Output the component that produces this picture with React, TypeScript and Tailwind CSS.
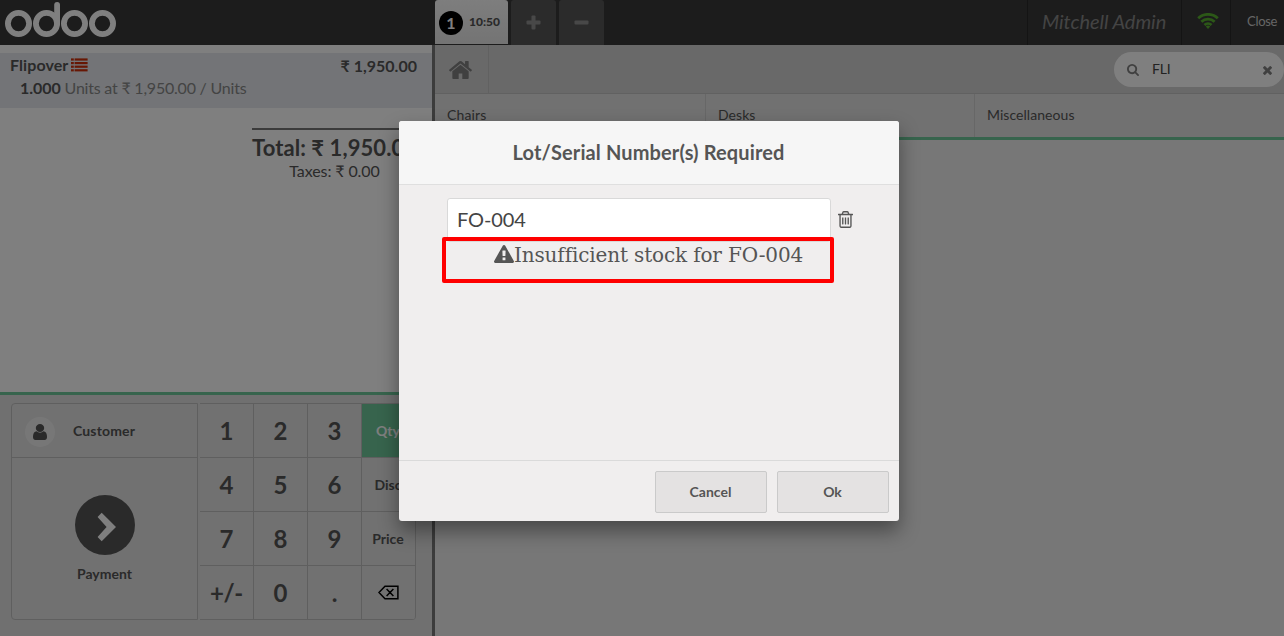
import React from 'react';
import type { ReactNode } from 'react';

const paths = {
  home: 'M1472 992v480q0 26-19 45t-45 19h-384v-384h-256v384h-384q-26 0-45-19t-19-45v-480q0-1 .5-3t.5-3l575-474 575 474q1 2 1 6zm223-69l-62 74q-8 9-21 11h-3q-13 0-21-7l-692-577-692 577q-12 8-24 7-13-2-21-11l-62-74q-8-10-7-23.5t11-21.5l719-599q32-26 76-26t76 26l244 204v-195q0-14 9-23t23-9h192q14 0 23 9t9 23v408l219 182q10 8 11 21.5t-7 23.5z',
  user: 'M1536 1399q0 109-62.5 187t-150.5 78h-854q-88 0-150.5-78t-62.5-187q0-85 8.5-160.5t31.5-152 58.5-131 94-89 134.5-34.5q131 128 313 128t313-128q76 0 134.5 34.5t94 89 58.5 131 31.5 152 8.5 160.5zm-256-887q0 159-112.5 271.5t-271.5 112.5-271.5-112.5-112.5-271.5 112.5-271.5 271.5-112.5 271.5 112.5 112.5 271.5z',
  search: 'M1216 832q0-185-131.5-316.5t-316.5-131.5-316.5 131.5-131.5 316.5 131.5 316.5 316.5 131.5 316.5-131.5 131.5-316.5zm512 832q0 52-38 90t-90 38q-54 0-90-38l-343-342q-179 124-399 124-143 0-273.5-55.5t-225-150-150-225-55.5-273.5 55.5-273.5 150-225 225-150 273.5-55.5 273.5 55.5 225 150 150 225 55.5 273.5q0 220-124 399l343 343q37 37 37 90z',
  times: 'M1490 1322q0 40-28 68l-136 136q-28 28-68 28t-68-28l-294-294-294 294q-28 28-68 28t-68-28l-136-136q-28-28-28-68t28-68l294-294-294-294q-28-28-28-68t28-68l136-136q28-28 68-28t68 28l294 294 294-294q28-28 68-28t68 28l136 136q28 28 28 68t-28 68l-294 294 294 294q28 28 28 68z',
  warning: 'M1024 1375v-190q0-14-9.5-23.5t-22.5-9.5h-192q-13 0-22.5 9.5t-9.5 23.5v190q0 14 9.5 23.5t22.5 9.5h192q13 0 22.5-9.5t9.5-23.5zm-2-374l18-459q0-12-10-19-13-11-24-11h-220q-11 0-24 11-10 7-10 21l17 457q0 10 10 16.5t24 6.5h185q14 0 23.5-6.5t10.5-16.5zm-14-934l768 1408q35 63-2 126-17 29-46.5 46t-63.5 17h-1536q-34 0-63.5-17t-46.5-46q-37-63-2-126l768-1408q17-31 47-49t65-18 65 18 47 49z',
  trash: 'M704 736v576q0 14-9 23t-23 9h-64q-14 0-23-9t-9-23v-576q0-14 9-23t23-9h64q14 0 23 9t9 23zm256 0v576q0 14-9 23t-23 9h-64q-14 0-23-9t-9-23v-576q0-14 9-23t23-9h64q14 0 23 9t9 23zm256 0v576q0 14-9 23t-23 9h-64q-14 0-23-9t-9-23v-576q0-14 9-23t23-9h64q14 0 23 9t9 23zm128 724v-948h-896v948q0 22 7 40.5t14.5 27 10.5 8.5h832q3 0 10.5-8.5t14.5-27 7-40.5zm-672-1076h448l-48-117q-7-9-17-11h-317q-10 2-17 11zm928 32v64q0 14-9 23t-23 9h-96v948q0 83-47 143.5t-113 60.5h-832q-66 0-113-58.5t-47-141.5v-952h-96q-14 0-23-9t-9-23v-64q0-14 9-23t23-9h309l70-167q15-37 54-63t79-26h320q40 0 79 26t54 63l70 167h309q14 0 23 9t9 23z',
};

function Icon({ d, viewBox, className }: { d: string; viewBox: string; className: string }) {
  return (
    <svg viewBox={viewBox} className={`shrink-0 ${className}`} fill="currentColor" preserveAspectRatio="none">
      <path d={d} />
    </svg>
  );
}

function Logo() {
  return (
    <svg viewBox="0 0 112 36" className="ml-[5px] mt-[2px] h-9 w-28" fill="none" stroke="#fff" strokeWidth="5.8">
      <circle cx="13.5" cy="21.5" r="10.6" />
      <circle cx="41.5" cy="21.5" r="10.6" />
      <circle cx="69.5" cy="21.5" r="10.6" />
      <circle cx="97.5" cy="21.5" r="10.6" />
      <path d="M52.1 21.5V2.9" strokeLinecap="round" />
    </svg>
  );
}

function Topbar() {
  return (
    <header className="flex h-[45px] bg-[#393939]">
      <div className="w-[435px]">
        <Logo />
      </div>
      <div className="flex flex-1 gap-[3px]">
        <div className="flex h-[44px] w-[73px] items-center rounded-t-[3px] bg-gradient-to-b from-[#fcfcfc] to-[#e8e8e8] pl-1">
          <span className="mt-[2px] flex size-6 items-center justify-center rounded-full bg-black text-base font-bold text-white">1</span>
          <span className="ml-[6px] text-[12px] font-black text-[#555]">10:50</span>
        </div>
        <div className="flex w-[45px] items-center justify-center rounded-t-[3px] bg-[#575757]">
          <svg className="size-[15px]" viewBox="0 0 15 15" fill="#919191"><rect x="5.5" y="0.5" width="4" height="14" rx="1" /><rect x="0.5" y="5.5" width="14" height="4" rx="1" /></svg>
        </div>
        <div className="flex w-[45px] items-center justify-center rounded-t-[3px] bg-[#575757]">
          <svg className="size-[15px]" viewBox="0 0 15 15"><rect x="0.5" y="5.5" width="14" height="4" rx="1" fill="#919191" /></svg>
        </div>
      </div>
      <div className="flex w-[257px] border-l border-[#292929]">
        <div className="w-[154px] border-r border-[#292929] pl-[14px] text-[20px] leading-[42px] tracking-[-0.05px] text-[#888] italic">Mitchell Admin</div>
        <div className="flex w-[49px] items-center justify-center border-r border-[#292929] pb-[3px] pl-[4px]">
          <svg className="h-4 w-[22px]" viewBox="0 0 22 16" fill="none" stroke="#58b12f" strokeWidth="2.8">
            <path d="M1.2 5.2a14.4 14.4 0 0 1 19.6 0M4.4 8.7a9.6 9.6 0 0 1 13.2 0M7.5 12a5.1 5.1 0 0 1 7 0" />
            <path d="M8.8 13.6a3.2 3.2 0 0 1 4.4 0L11 16z" fill="#58b12f" stroke="none" />
          </svg>
        </div>
        <div className="flex-1 pl-4 text-[13px] leading-[42px] tracking-[-0.3px] text-[#ccc]">Close</div>
      </div>
    </header>
  );
}

function Order() {
  return (
    <section className="h-[347px] bg-white pt-2">
      <div className="h-[55px] bg-[#e6e8ee] pr-[15px] pl-2.5 pt-px">
        <div className="flex h-[22px] justify-between text-[16px] leading-[22px] font-bold">
          <span className="flex">
            <span className="tracking-[0.08px]">Flipover</span>
            <svg className="mt-[4px] ml-[3px] h-[14px] w-[17px]" viewBox="0 0 17 14" fill="#ce2f08">
              {[0.4, 4, 7.6, 11.2].map((y) => (
                <g key={y}><rect x="0" y={y} width="2.8" height="2.2" /><rect x="3.6" y={y} width="13" height="2.2" /></g>
              ))}
            </svg>
          </span>
          <span className="pt-px">₹ 1,950.00</span>
        </div>
        <div className="mt-px pl-[10px] text-[16px] leading-[22px] tracking-[-0.21px] text-[#888]"><b className="tracking-[-0.05px] text-[#555]">1.000</b> Units at ₹ 1,950.00 / Units</div>
      </div>
      <div className="mt-[21px] ml-[252px] w-[165px] border-t-2 border-[#777] text-center -translate-y-px">
        <div className="mt-[3px] text-[22px] leading-[30px] tracking-[0.08px] font-bold whitespace-nowrap">Total: ₹ 1,950.00</div>
        <div className="mt-[-2px] text-[16px] leading-[20px] tracking-[-0.1px]">Taxes: ₹ 0.00</div>
      </div>
    </section>
  );
}

const backspace = (
  <svg className="h-[15px] w-[21px]" viewBox="0 0 21 15" fill="none" stroke="#000" strokeWidth="1.5">
    <path d="M1 7.5 7 1.2H19.9V13.8H7Z M8.6 4 15.4 11M15.4 4 8.6 11" />
  </svg>
);
const keys: ReactNode[] = ['1', '2', '3', 'Qty', '4', '5', '6', 'Disc', '7', '8', '9', 'Price', '+/-', '0', '.', backspace];

function Pads() {
  return (
    <section className="flex h-[244px] border-t-[3px] border-[#6ec89b] bg-[#e0e0e0] pt-2 pl-[11px] font-bold">
      <div className="h-[217px] w-[187px] rounded-l border border-[#bfbfbf] bg-[#e2e2e2]">
        <div className="flex h-[54px] items-center border-b border-[#bfbfbf] pl-[13px]">
          <div className="mt-[3px] flex size-[30px] items-center justify-center rounded-full bg-[#efefef]">
            <Icon d={paths.user} viewBox="256 128 1280 1536" className="h-[16px] w-[14px]" />
          </div>
          <span className="ml-[18px] text-[14px] tracking-[0.15px]">Customer</span>
        </div>
        <div className="flex flex-col items-center pt-[37px]">
          <div className="flex size-[60px] items-center justify-center rounded-full bg-[#555]">
            <svg className="mt-[3px] ml-[4px] h-[30px] w-[19px]" viewBox="0 0 19 30"><path d="M4.7.8 18 14a1.2 1.2 0 0 1 0 2L4.7 29.2.6 25.1 9.6 15 .6 4.9Z" fill="#fff" /></svg>
          </div>
          <span className="mt-[9px] text-[14px] leading-5">Payment</span>
        </div>
      </div>
      <div className="ml-[2px] grid h-[217px] w-[216px] grid-cols-[54px_54px_54px_54px] grid-rows-[54px_54px_54px_54px] overflow-hidden rounded-r border-t border-r border-[#bfbfbf] bg-[#e2e2e2]">
        {keys.map((key, i) => (
          <div
            key={i}
            className={`flex items-center justify-center border-b border-[#bfbfbf] ${i % 4 < 3 ? 'border-r text-[24px]' : 'pr-[2px] text-[14px]'} ${i === 12 ? 'tracking-[-0.4px]' : ''} ${i === 3 ? 'bg-[#6ec89b] text-white' : ''}`}
          >
            {key}
          </div>
        ))}
      </div>
    </section>
  );
}

function Products() {
  return (
    <section className="flex-1 bg-[#eee]">
      <div className="flex h-[49px] justify-between border-b border-[#c3c3c3] bg-[#d3d3d3]">
        <div className="flex w-[54px] items-center border-r border-[#c3c3c3] pt-[2px] pl-[14px] text-[#808080]">
          <Icon d={paths.home} viewBox="85 253 1622 1283" className="h-[18px] w-[23px]" />
        </div>
        <div className="mt-[7px] flex h-[35px] w-[170px] items-center rounded-full bg-white pr-[12px] pl-[13px] text-[#808080]">
          <Icon d={paths.search} viewBox="64 128 1664 1664" className="mt-px size-3" />
          <span className="mb-[2px] ml-[13px] flex-1 text-[14px] tracking-[-0.2px] text-[#444]">FLI</span>
          <Icon d={paths.times} viewBox="302 366 1188 1188" className="mt-px size-[9px]" />
        </div>
      </div>
      <div className="flex h-[46px] border-b-[3px] border-[#6ec89b] bg-[#e2e2e2] text-[14px] leading-[41px]">
        <div className="w-[271px] border-r border-r-[#cfcfcf] pl-3 tracking-[0.15px]">Chairs</div>
        <div className="w-[269px] border-r border-r-[#cfcfcf] pl-3 tracking-[0.05px]">Desks</div>
        <div className="pl-3 tracking-[0.05px]">Miscellaneous</div>
      </div>
    </section>
  );
}

function LotDialog() {
  return (
    <div className="absolute inset-0 bg-black/50 pt-[121px] pl-[399px]">
      <div role="dialog" className="flex h-[400px] w-[500px] flex-col overflow-hidden rounded-[3px] bg-[#f0eeee] shadow-[0_10px_20px_rgba(0,0,0,0.4)]">
        <h1 className="h-16 border-b border-[#dfdfdf] bg-[#f6f6f6] pr-px text-center text-[20px] leading-[63px] font-bold tracking-[0.12px]">Lot/Serial Number(s) Required</h1>
        <div className="h-[275px] pt-[13px] pl-12">
          <div className="flex">
            <div className="h-[44px] w-[384px] rounded-[3px] border border-[#d9d9d9] bg-white pl-[9px] text-[20px] leading-[40px] tracking-[-0.1px] text-[#444]">FO-004</div>
            <Icon d={paths.trash} viewBox="192 128 1408 1536" className="mt-[13px] ml-[7px] h-[17px] w-[15px]" />
          </div>
          <div className="relative mt-[-5px] ml-[-5px] flex h-[46px] w-[392px] rounded-[2px] border-4 border-[#f00] pl-12">
            <Icon d={paths.warning} viewBox="0 0 1792 1664" className="mt-[4px] h-[18px] w-[20px]" />
            <span className="font-['DejaVu_Serif',serif] text-[20px] leading-[28px] tracking-[-0.14px] [font-variant-ligatures:common-ligatures] whitespace-nowrap">Insufficient stock for FO-004</span>
          </div>
        </div>
        <div className="flex h-[61px] justify-end gap-2.5 border-t border-[#dadada] pt-[10px] pr-2.5 text-[14px] font-bold">
          <button className="h-[42px] w-28 rounded-[2px] border border-[#cacaca] bg-[#e4e2e2] pr-px pb-[2px]">Cancel</button>
          <button className="h-[42px] w-28 rounded-[2px] border border-[#cacaca] bg-[#e4e2e2] pr-px pb-[2px]">Ok</button>
        </div>
      </div>
    </div>
  );
}

export default function App() {
  return (
    <div className="relative h-[636px] w-[1284px] overflow-hidden font-['Lato','Liberation_Sans',sans-serif] text-[#555]">
      <Topbar />
      <main className="flex h-[591px]">
        <div className="w-[435px] border-r-[3px] border-[#787878]">
          <Order />
          <Pads />
        </div>
        <Products />
      </main>
      <LotDialog />
    </div>
  );
}
